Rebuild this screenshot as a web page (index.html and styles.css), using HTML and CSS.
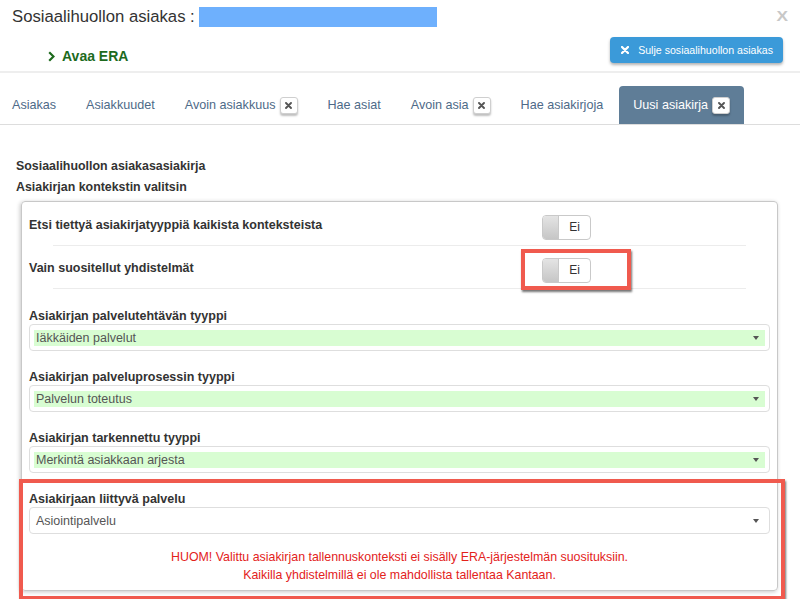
FILE: index.html
```html
<!DOCTYPE html>
<html lang="fi">
<head>
<meta charset="utf-8">
<title>Sosiaalihuollon asiakas</title>
<link rel="stylesheet" href="styles.css">
</head>
<body>
<header class="header">
  <div class="title-row">
    <h1 class="title">Sosiaalihuollon asiakas :</h1>
    <span class="name-mask"></span>
    <span class="close-x">X</span>
  </div>
  <div class="action-row">
    <a class="era-link" href="#">
      <svg class="chev" width="7" height="11" viewBox="0 0 7 11"><path d="M1.2 1.2 L5.5 5.5 L1.2 9.8" fill="none" stroke="#1d6a1d" stroke-width="2.2"/></svg>
      <span>Avaa ERA</span>
    </a>
    <button class="btn-close">
      <svg class="xicon" width="8" height="8" viewBox="0 0 8 8"><path d="M1 1 L7 7 M7 1 L1 7" stroke="#fff" stroke-width="2.3" stroke-linecap="round"/></svg>
      <span>Sulje sosiaalihuollon asiakas</span>
    </button>
  </div>
</header>

<nav class="tabs">
  <a class="tab" href="#">Asiakas</a>
  <a class="tab" href="#">Asiakkuudet</a>
  <a class="tab" href="#">Avoin asiakkuus<span class="badge"><svg width="7" height="7" viewBox="0 0 7 7"><path d="M1 1 L6 6 M6 1 L1 6" stroke="#555" stroke-width="1.9" stroke-linecap="round"/></svg></span></a>
  <a class="tab" href="#">Hae asiat</a>
  <a class="tab" href="#">Avoin asia<span class="badge"><svg width="7" height="7" viewBox="0 0 7 7"><path d="M1 1 L6 6 M6 1 L1 6" stroke="#555" stroke-width="1.9" stroke-linecap="round"/></svg></span></a>
  <a class="tab" href="#">Hae asiakirjoja</a>
  <a class="tab active" href="#">Uusi asiakirja<span class="badge"><svg width="7" height="7" viewBox="0 0 7 7"><path d="M1 1 L6 6 M6 1 L1 6" stroke="#555" stroke-width="1.9" stroke-linecap="round"/></svg></span></a>
</nav>

<main class="content">
  <h2 class="heading">Sosiaalihuollon asiakasasiakirja</h2>
  <h3 class="heading">Asiakirjan kontekstin valitsin</h3>

  <section class="panel">
    <div class="switch-row first">
      <span class="row-label">Etsi tiettyä asiakirjatyyppiä kaikista konteksteista</span>
      <span class="toggle"><span class="knob"></span><span class="toggle-text">Ei</span></span>
    </div>
    <div class="sep"></div>
    <div class="switch-row">
      <span class="row-label">Vain suositellut yhdistelmät</span>
      <span class="toggle marked"><span class="knob"></span><span class="toggle-text">Ei</span></span>
    </div>
    <div class="sep"></div>

    <div class="group first-group">
      <label class="group-label">Asiakirjan palvelutehtävän tyyppi</label>
      <div class="select"><span class="select-value green">Iäkkäiden palvelut</span><span class="caret"></span></div>
    </div>
    <div class="group">
      <label class="group-label">Asiakirjan palveluprosessin tyyppi</label>
      <div class="select"><span class="select-value green">Palvelun toteutus</span><span class="caret"></span></div>
    </div>
    <div class="group">
      <label class="group-label">Asiakirjan tarkennettu tyyppi</label>
      <div class="select"><span class="select-value green">Merkintä asiakkaan arjesta</span><span class="caret"></span></div>
    </div>
    <div class="group annot">
      <label class="group-label">Asiakirjaan liittyvä palvelu</label>
      <div class="select"><span class="select-value">Asiointipalvelu</span><span class="caret"></span></div>
      <p class="warning">HUOM! Valittu asiakirjan tallennuskonteksti ei sisälly ERA-järjestelmän suosituksiin.<br>Kaikilla yhdistelmillä ei ole mahdollista tallentaa Kantaan.</p>
    </div>
  </section>
</main>
</body>
</html>
```
FILE: styles.css
```css
* { box-sizing: border-box; }
html, body { margin: 0; padding: 0; }
body {
  width: 800px;
  height: 599px;
  overflow: hidden;
  background: #fff;
  font-family: "Liberation Sans", Arial, Helvetica, sans-serif;
  color: #333;
  font-size: 12.5px;
}

/* header */
.header {
  border-bottom: 2px solid #eeeeee;
  padding-bottom: 8px;
}
.title-row {
  display: flex;
  align-items: center;
  height: 20px;
  margin-top: 7px;
  padding: 0 12px;
}
.title {
  margin: 0;
  font-size: 16.7px;
  font-weight: normal;
  line-height: 20px;
  color: #333;
}
.name-mask {
  display: block;
  width: 238px;
  height: 20px;
  margin-left: 4px;
  background: #6eb0fd;
}
.close-x {
  margin-left: auto;
  font-size: 15px;
  font-weight: bold;
  color: #c8c8c8;
  line-height: 20px;
  margin-top: -3px;
  display: inline-block;
  transform: scaleX(1.15);
  transform-origin: right center;
}
.action-row {
  display: flex;
  align-items: center;
  justify-content: space-between;
  margin-top: 10px;
  padding: 0 17px 0 48px;
  height: 26px;
}
.era-link {
  display: flex;
  align-items: center;
  margin-top: 12px;
  color: #1d6a1d;
  font-weight: bold;
  font-size: 14px;
  text-decoration: none;
}
.era-link .chev { margin-right: 7px; }
.btn-close {
  display: flex;
  align-items: center;
  height: 26px;
  padding: 0 10px 0 11px;
  border: none;
  border-radius: 4px;
  background: #3b9ad9;
  color: #fff;
  font-family: inherit;
  font-size: 10.6px;
  box-shadow: 0 2px 3px rgba(0,0,0,0.3);
}
.btn-close .xicon { margin-right: 9px; }

/* tabs */
.tabs {
  display: flex;
  align-items: flex-end;
  padding-top: 13px;
  margin-left: -2px;
  border-bottom: 1px solid #dddddd;
}
.tab {
  display: flex;
  align-items: center;
  height: 38px;
  padding: 0 14px;
  margin-right: 2px;
  color: #4e6a88;
  font-size: 12.6px;
  text-decoration: none;
  border-radius: 4px 4px 0 0;
}
.tab.active {
  background: #5f7d97;
  color: #fff;
}
.badge {
  display: inline-flex;
  align-items: center;
  justify-content: center;
  width: 18px;
  height: 17px;
  margin-left: 4px;
  background: #fff;
  border: 1px solid #cfcfcf;
  border-radius: 3px;
  box-shadow: 0 2px 2px rgba(0,0,0,0.25);
}

/* content */
.content {
  padding: 31px 22px 0 16px;
}
.heading {
  margin: 0;
  font-size: 12.4px;
  font-weight: bold;
  line-height: 21px;
  color: #333;
}
.panel {
  margin: 3px 0 0 5px;
  border: 1px solid #c8c8c8;
  border-radius: 4px;
  box-shadow: -1px 1px 4px rgba(0,0,0,0.22);
  padding: 1px 7px 0 7px;
}
.switch-row {
  display: flex;
  align-items: flex-start;
  padding: 12px 0 5px;
}
.row-label {
  flex: 0 0 513px;
  margin-top: 2px;
  font-weight: bold;
  line-height: 16px;
}
.toggle {
  position: relative;
  display: flex;
  width: 49px;
  height: 25px;
  border: 1px solid #c9c9c9;
  border-radius: 4px;
  background: #fff;
}
.knob {
  width: 16px;
  height: 100%;
  border-right: 1px solid #c9c9c9;
  border-radius: 3px 0 0 3px;
  background: linear-gradient(#e4e4e4, #c6c6c6);
}
.toggle-text {
  flex: 1;
  text-align: center;
  line-height: 23px;
  font-size: 12px;
  color: #333;
}
.toggle.marked::after {
  content: "";
  position: absolute;
  top: -10px;
  left: -22px;
  right: -41px;
  bottom: -8px;
  border: 4px solid #f05a4e;
  box-shadow: 1px 2px 2px rgba(0,0,0,0.55);
}
.sep {
  height: 1px;
  margin: 0 24px;
  background: #ececec;
}
.group {
  margin-top: 18px;
}
.group.first-group { margin-top: 19px; }
.group-label {
  display: block;
  font-weight: bold;
  line-height: 16px;
}
.select {
  position: relative;
  height: 27px;
  padding: 5px 4px 4px;
  border: 1px solid #dedede;
  border-radius: 4px;
  background: #fff;
}
.select-value {
  display: block;
  height: 16px;
  padding-left: 2px;
  line-height: 16px;
  color: #555;
}
.select-value.green { background: #d8fdd2; }
.caret {
  position: absolute;
  right: 10px;
  top: 11px;
  width: 0;
  height: 0;
  border-left: 3.5px solid transparent;
  border-right: 3.5px solid transparent;
  border-top: 4px solid #555;
}
.annot {
  position: relative;
  padding-bottom: 6px;
}
.annot::after {
  content: "";
  position: absolute;
  top: -12px;
  left: -10px;
  right: -15px;
  bottom: -10px;
  border: 4px solid #f05a4e;
  box-shadow: 1px 2px 2px rgba(0,0,0,0.55);
  pointer-events: none;
}
.warning {
  margin: 14px 0 0;
  text-align: center;
  line-height: 18px;
  color: #e3221b;
  font-size: 12.4px;
}
```
